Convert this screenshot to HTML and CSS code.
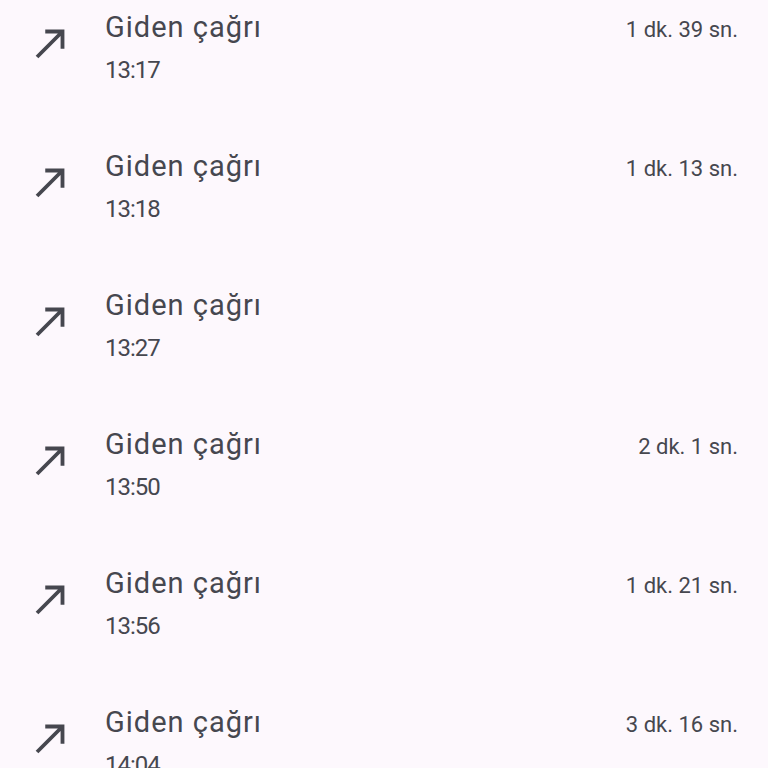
FILE: index.html
```
<!doctype html>
<html>
<head>
<meta charset="utf-8">
<title>Arama geçmişi</title>
<link rel="stylesheet" href="styles.css">
</head>
<body>
<ul class="calls">
	<li class="call">
		<svg class="icon" viewBox="0 0 24 24"><path d="M9 5v2h6.59L4 18.59 5.41 20 17 8.41V15h2V5z"/></svg>
		<div class="info">
			<div class="top"><span class="type">Giden çağrı</span><span class="dur">1 dk. 39 sn.</span></div>
			<div class="time">13:17</div>
		</div>
	</li>
	<li class="call">
		<svg class="icon" viewBox="0 0 24 24"><path d="M9 5v2h6.59L4 18.59 5.41 20 17 8.41V15h2V5z"/></svg>
		<div class="info">
			<div class="top"><span class="type">Giden çağrı</span><span class="dur">1 dk. 13 sn.</span></div>
			<div class="time">13:18</div>
		</div>
	</li>
	<li class="call">
		<svg class="icon" viewBox="0 0 24 24"><path d="M9 5v2h6.59L4 18.59 5.41 20 17 8.41V15h2V5z"/></svg>
		<div class="info">
			<div class="top"><span class="type">Giden çağrı</span><span class="dur"></span></div>
			<div class="time">13:27</div>
		</div>
	</li>
	<li class="call">
		<svg class="icon" viewBox="0 0 24 24"><path d="M9 5v2h6.59L4 18.59 5.41 20 17 8.41V15h2V5z"/></svg>
		<div class="info">
			<div class="top"><span class="type">Giden çağrı</span><span class="dur">2 dk. 1 sn.</span></div>
			<div class="time">13:50</div>
		</div>
	</li>
	<li class="call">
		<svg class="icon" viewBox="0 0 24 24"><path d="M9 5v2h6.59L4 18.59 5.41 20 17 8.41V15h2V5z"/></svg>
		<div class="info">
			<div class="top"><span class="type">Giden çağrı</span><span class="dur">1 dk. 21 sn.</span></div>
			<div class="time">13:56</div>
		</div>
	</li>
	<li class="call">
		<svg class="icon" viewBox="0 0 24 24"><path d="M9 5v2h6.59L4 18.59 5.41 20 17 8.41V15h2V5z"/></svg>
		<div class="info">
			<div class="top"><span class="type">Giden çağrı</span><span class="dur">3 dk. 16 sn.</span></div>
			<div class="time">14:04</div>
		</div>
	</li>
</ul>
</body>
</html>
```
FILE: styles.css
```
*{ margin:0; padding:0; list-style:none; box-sizing:border-box;}
html,body{ height:100%; overflow:hidden;}
body{ background:#fdf8fd; color:#46474f; font-family:Roboto, "Noto Sans", sans-serif;}

.calls{ display:flex; flex-direction:column;}
.call{ display:flex; height:139px; padding:8px 30px 0 28px;}
.icon{ width:46px; height:46px; margin-top:12px; fill:#46474f; flex-shrink:0;}
.info{ flex:1; margin-left:31px;}
.top{ display:flex; justify-content:space-between; align-items:baseline;}
.type{ font-size:29px; line-height:38px; letter-spacing:1px;}
.dur{ font-size:22px;}
.time{ font-size:24px; line-height:32px; margin-top:8px; letter-spacing:-1px;}
```
